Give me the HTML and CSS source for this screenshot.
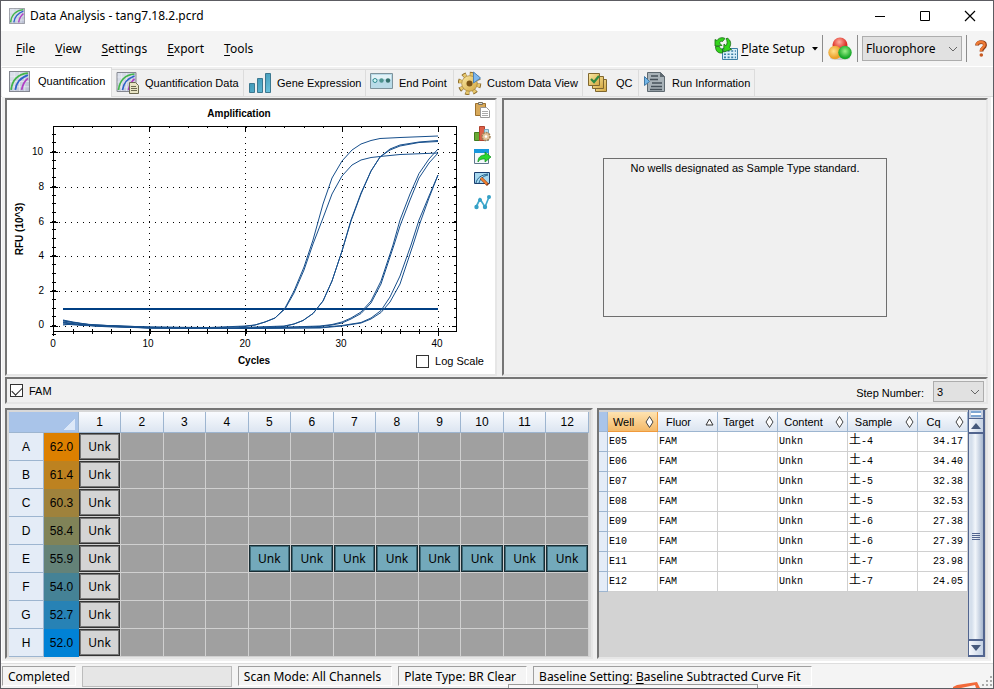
FILE: index.html
```html
<!DOCTYPE html>
<html lang="en">
<head>
<meta charset="utf-8">
<title>Data Analysis - tang7.18.2.pcrd</title>
<link rel="stylesheet" href="styles.css">
</head>
<body>
<svg class="defs" aria-hidden="true">
  <defs>
    <linearGradient id="teal" x1="0" x2="1" y1="0" y2="1"><stop offset="0" stop-color="#2f87a8"/><stop offset="1" stop-color="#6cc3dd"/></linearGradient>
    <linearGradient id="pale" x1="0" x2="1" y1="0" y2="1"><stop offset="0" stop-color="#dfe4ee"/><stop offset="1" stop-color="#b9bfd2"/></linearGradient>
    <linearGradient id="gold" x1="0" x2="1" y1="0" y2="1"><stop offset="0" stop-color="#fae9a6"/><stop offset="1" stop-color="#d3a63e"/></linearGradient>
    <radialGradient id="red" cx=".45" cy=".3"><stop offset="0" stop-color="#ffb0a0"/><stop offset="1" stop-color="#dc2a22"/></radialGradient>
    <radialGradient id="amber" cx=".4" cy=".4"><stop offset="0" stop-color="#ffe08a"/><stop offset="1" stop-color="#eba02a"/></radialGradient>
    <radialGradient id="green" cx=".5" cy=".4"><stop offset="0" stop-color="#9cf08a"/><stop offset="1" stop-color="#17a828"/></radialGradient>
    <symbol id="curves" viewBox="0 0 20 20">
      <path fill="url(#pale)" stroke="#858891" d="M.5.5h19v19H.5z"/>
      <path stroke="#eef0f6" stroke-width=".6" d="M1 5h18M1 10h18M1 15h18M5 1v18M10 1v18M15 1v18"/>
      <g fill="none" stroke-width="1.7"><path stroke="#42b54a" d="M2 18C3 9 8 3 18 2"/><path stroke="#2d62c8" d="M6 18c1-7 4-11 12-14"/><path stroke="#b03fc4" d="M12 18c1-5 2-8 6-11"/></g>
    </symbol>
  </defs>
</svg>
<div class="window">
  <header class="titlebar">
    <svg class="app-icon" width="16" height="16" aria-hidden="true"><use href="#curves"/></svg>
    <h1>Data Analysis - tang7.18.2.pcrd</h1>
    <div class="controls">
      <button aria-label="Minimize"><svg width="12" height="12"><path stroke="#000" d="M1 6.500h10"/></svg></button>
      <button aria-label="Maximize"><svg width="12" height="12"><path fill="none" stroke="#000" d="M1.500 1.500h9v9h-9z"/></svg></button>
      <button aria-label="Close"><svg width="12" height="12"><path stroke="#000" stroke-width="1.200" d="M1 1l10 10M11 1L1 11"/></svg></button>
    </div>
  </header>

  <div class="menubar">
    <nav class="menus">
      <button><u>F</u>ile</button><button><u>V</u>iew</button><button><u>S</u>ettings</button><button><u>E</u>xport</button><button><u>T</u>ools</button>
    </nav>
    <button class="plate-setup">
      <svg width="24" height="24" viewBox="0 0 24 24" aria-hidden="true">
        <path fill="#d9effa" stroke="#3d7fa5" d="M8.500 11.500h15v11h-15z"/>
        <path stroke="#3d7fa5" stroke-width="1.600" stroke-dasharray="2 1.600" d="M10 14h12M10 17.200h12M10 20.400h12"/>
        <path fill="#33d41c" stroke="#176b13" stroke-width=".8" d="M1 9V2.500l2 1C5 .5 8.500 0 11 1.500L8.500 4.500C7 4 6 4.500 5.500 6L8 8.500z"/>
        <path fill="#33d41c" stroke="#176b13" stroke-width=".8" d="M1.500 9.500c0 5 3 7 7 6.500v-4c-1.500 0-3-1-3-2.500zM13 1c4 2 4.500 6 2.500 9.500l2 2-8 2.500.5-8 2 1.800C13.500 6.500 13.500 4 12 2z"/>
      </svg>
      <span><u>P</u>late Setup</span>
      <svg width="6" height="4" aria-hidden="true"><path d="M0 0h6L3 3.500z"/></svg>
    </button>
    <span class="sep"></span>
    <button class="channels" aria-label="Channels">
      <svg width="24" height="24" viewBox="0 0 24 24"><ellipse cx="12" cy="21.500" rx="10" ry="1.500" fill="#ccc"/><circle cx="12" cy="8" r="7.500" fill="url(#red)"/><circle cx="7" cy="15.500" r="6.700" fill="url(#amber)"/><circle cx="17" cy="15.500" r="6.700" fill="url(#green)"/></svg>
    </button>
    <span class="sep"></span>
    <div class="select fluor">
      <select aria-label="View by"><option>Fluorophore</option></select>
      <svg width="10" height="6" aria-hidden="true"><path fill="none" stroke="#666" d="M1 1l4 4 4-4"/></svg>
    </div>
    <span class="sep"></span>
    <button class="help" aria-label="Help">
      <svg width="12" height="17" viewBox="0 0 12 17"><path fill="none" stroke="#8f3c16" stroke-width="3.800" d="M2 5.500C2 1 10.500 1 10 5.300 9.700 8 6.500 7.500 6.500 11.500"/><path fill="none" stroke="#ee7a35" stroke-width="2.400" d="M2 5C2 1 10 1 9.500 5 9.200 7.500 6 7.500 6 11.200"/><circle cx="6.300" cy="15" r="1.800" fill="#c85a22"/></svg>
    </button>
  </div>

  <nav class="tabs" role="tablist">
    <button class="tab active" role="tab" aria-selected="true"><svg width="21" height="21"><use href="#curves"/></svg>Quantification</button>
    <button class="tab" role="tab"><svg width="24" height="24" viewBox="0 0 24 24"><use href="#curves" x="0" y="1" width="21" height="20"/><path fill="#e8e4c4" stroke="#6d6a50" d="M13.500 11.500h6l3 3v8h-9z"/><path stroke="#6d6a50" d="M15 15.500h5M15 17.500h6M15 19.500h6"/></svg>Quantification Data</button>
    <button class="tab" role="tab"><svg width="24" height="24" viewBox="0 0 24 24"><g fill="url(#teal)" stroke="#3c7890"><path d="M1.500 12.500h5v9h-5zM9.500 7.500h5v14h-5zM17.500 2.500h5v19h-5z"/></g></svg>Gene Expression</button>
    <button class="tab" role="tab"><svg width="24" height="24" viewBox="0 0 24 24"><path fill="#b9dbe8" stroke="#7e939c" d="M.5 2.500h22v15H.5z"/><path fill="#e2f2f7" d="M2 4h19v4H2z"/><circle cx="5" cy="9.500" r="2" fill="#d4f7f4" stroke="#328a91"/><circle cx="11.500" cy="9.500" r="2.200" fill="#4d9490"/><circle cx="18" cy="9.500" r="2.200" fill="#34716d"/></svg>End Point</button>
    <button class="tab" role="tab"><svg width="24" height="24" viewBox="0 0 24 24"><circle cx="11.500" cy="12.500" r="9.500" fill="none" stroke="#8d6c2b" stroke-width="4.500" stroke-dasharray="4 3.460"/><circle cx="11.500" cy="12.500" r="9" fill="none" stroke="#e6c76c" stroke-width="3.500" stroke-dasharray="3 4.060" stroke-dashoffset="-.5"/><circle cx="11.500" cy="12.500" r="7.800" fill="url(#gold)" stroke="#a47f35" stroke-width=".7"/><circle cx="11.500" cy="12.500" r="3" fill="#7b5416"/><path fill="#7eb8ee" stroke="#4e83b5" d="M15.500 1l7 6-7 5z"/></svg>Custom Data View</button>
    <button class="tab" role="tab"><svg width="24" height="24" viewBox="0 0 24 24"><g fill="url(#gold)" stroke="#80672e"><path d="M8.500 8.500h11v12h-11z"/><path d="M5.500 5.500h11v12h-11z"/><path d="M1.500 2.500h11v12h-11z"/></g><path fill="none" stroke="#2f8a43" stroke-width="2.200" d="M4 8l3 3 5-6"/></svg>QC</button>
    <button class="tab" role="tab"><svg width="24" height="24" viewBox="0 0 24 24"><path fill="#a8b2b8" stroke="#5e6970" d="M4.500 1.500h13l4 4v15h-17z"/><path fill="#5e6970" d="M17 1v5h5z"/><path stroke="#46515a" stroke-width="1.600" d="M8 5h7M7 8.500h8M9 12h10M8 15.500h11M7 18.500h12"/><path fill="#72b6e8" stroke="#4279a5" d="M1.500 5.500l5 5-5 4z"/></svg>Run Information</button>
  </nav>

  <main class="page">
    <div class="charts">
      <section class="panel amp">
        <div class="plot-row">
          <svg class="plot" viewBox="7 101 460 251" role="img" aria-label="Amplification chart">
            <text class="bold" x="239" y="118" text-anchor="middle">Amplification</text>
            <text class="bold" transform="translate(23 230) rotate(-90)" text-anchor="middle">RFU (10^3)</text>
            <g class="crisp">
              <path class="dots" d="M59 153.500h397M59 188.500h397M59 223.500h397M59 257.500h397M59 292.500h397M59 327.500h397"/>
              <path class="dots" d="M149.500 132v200M245.500 132v200M342.500 132v200M438.500 132v200"/>
              <path class="axis" d="M53.500 127.500h403v205h-403z"/>
              <path stroke="#000" stroke-width="4" stroke-dasharray="1 7.700" d="M53.500 335.700V127"/>
              <path stroke="#000" stroke-width="3" stroke-dasharray="1 7.700" d="M455.500 327.500V127"/>
              <path stroke="#000" stroke-width="5" stroke-dasharray="1 18.250" d="M72.500 332.500H457"/>
              <path stroke="#000" stroke-width="2" stroke-dasharray="1 18.250" d="M72.500 128H457"/>
              <path class="axis" d="M50 153.500h8M50 188.500h8M50 223.500h8M50 257.500h8M50 292.500h8M50 327.500h8M452 153.500h4M452 188.500h4M452 223.500h4M452 257.500h4M452 292.500h4M452 327.500h4M53.500 329v8M149.500 329v8M245.500 329v8M342.500 329v8M438.500 329v8M149.500 128v4M245.500 128v4M342.500 128v4M438.500 128v4"/>
            </g>
            <g text-anchor="end"><text x="43" y="156">10</text><text x="44" y="191">8</text><text x="44" y="226">6</text><text x="44" y="260">4</text><text x="44" y="295">2</text><text x="44" y="329">0</text></g>
            <g text-anchor="middle"><text x="53" y="348">0</text><text x="148" y="348">10</text><text x="245" y="348">20</text><text x="341" y="348">30</text><text x="437" y="348">40</text></g>
            <path class="threshold" d="M63 310h375"/>
            <g class="curve">
              <path d="M63 321L73 323 92 326 149 328 209 328.500 245 327 255 326 265 323 275 319 285 309 294 292 304 268 313 241 323 205 332 179 342 162 352 151 361 145 371 141.500 380 139.500 400 138.500 438 137"/>
              <path d="M63 321.500L73 323.500 92 326 149 328 209 329 245 327.500 255 326 265 323 275 319 285 310 294 294 304 271 313 245 323 219 332 195 342 177 352 166 361 161 371 158.500 380 157.500 400 155.500 438 154"/>
              <path d="M63 323L78 325.500 102 327.500 149 328.500 229 329 284 327 294 325 303 321.500 313 314.500 323 302 332 282 342 252 351 221 361 194 371 172 380 158 390 150 400 146 419 143 438 141.500"/>
              <path d="M63 323.500L78 325.500 102 327.500 149 329 229 329.500 284 327.500 294 325 303 321.500 313 314.500 323 302 332 282 342 252 351 222 361 195 371 172 380 158 390 151 400 147 419 143.500 438 142.500"/>
              <path d="M63 325L83 326.500 149 328.500 245 329.500 320 327 332 325.500 342 323 351 319 361 313 371 302 381 282 393 246 400 221 410 195 419 174.500 429 160 438 150"/>
              <path d="M63 326L72 325 83 326 149 328.500 245 329.500 320 327.500 332 326 342 324 351 320 361 314.500 371 304 381 285 394 246 400 227 410 201 419 179 429 164 438 154"/>
              <path d="M63 322L83 325 149 329 245 329.500 320 328.500 342 326.500 361 323.500 371 319 381 311.500 390 298 400 277 411 246 419 221 429 197 438 176"/>
              <path d="M63 324L83 326 149 329 245 329.500 320 329 342 327 361 324 371 320 381 313.500 390 303 400 285 413 246 420 224 429 199 438 176"/>
            </g>
          </svg>
          <div class="tools">
            <button aria-label="Copy"><svg width="17" height="17" viewBox="0 0 17 17"><path fill="#d8a95a" stroke="#9b702f" d="M1.500 1.500h10v12h-10z"/><path fill="#ddd" stroke="#77705e" d="M4.500.5h4v2h-4z"/><path fill="#fff" stroke="#999" d="M6.500 5.500h6l3 3v7h-9z"/><path stroke="#aaa" d="M8 9.500h6M8 11.500h6M8 13.500h6"/></svg></button>
            <button aria-label="Chart settings"><svg width="17" height="17" viewBox="0 0 17 17"><path fill="#6aa934" stroke="#417c1d" d="M.5 7.500h5v8h-5z"/><path fill="#dc6049" stroke="#b0432f" d="M5.500 1.500h5v14h-5z"/><path fill="#b9deef" stroke="#78a8be" d="M10.500 4.500h4v11h-4z"/><circle cx="12" cy="11.500" r="4" fill="#e3c39a" stroke="#a28055" stroke-width="1.500" stroke-dasharray="2 1"/><circle cx="12" cy="11.500" r="1.300" fill="#fff"/></svg></button>
            <button aria-label="Export"><svg width="17" height="17" viewBox="0 0 17 17"><path fill="#f4f8fb" stroke="#60788c" d="M.5 1.500h14v14H.5z"/><path fill="#1797dd" d="M0 1h15v4H0z"/><path fill="#29d72e" stroke="#138a21" stroke-width=".7" d="M4 14c0-5 3-7 7-7V4l6 5-6 5v-3c-3 0-5 0-7 3z"/></svg></button>
            <button aria-label="Edit chart"><svg width="17" height="17" viewBox="0 0 17 17"><path fill="#a7d8ef" stroke="#1b3f70" d="M.5 1.500h15v11H.5z"/><path fill="none" stroke="#1e5b85" d="M2 12c1-5 5-8 12-9M5 12c1-4 4-7 9-8"/><path stroke="#8a3a18" stroke-width="3" d="M7 7l7 7"/><path stroke="#f08030" stroke-width="2" d="M7 7l6 6"/></svg></button>
            <button aria-label="Show points"><svg width="17" height="17" viewBox="0 0 17 17"><path fill="none" stroke="#42a9cd" stroke-width="1.700" d="M2 13l4-8 5 8 4-10"/><g fill="#35a0c6"><circle cx="2.500" cy="13" r="2.200"/><circle cx="6" cy="6" r="2"/><circle cx="11" cy="13" r="2.200"/><circle cx="15" cy="3" r="2"/></g></svg></button>
          </div>
        </div>
        <div class="plot-foot">
          <span class="x-title">Cycles</span>
          <label class="check"><input type="checkbox">Log Scale</label>
        </div>
      </section>
      <section class="panel standard"><p>No wells designated as Sample Type standard.</p></section>
    </div>

    <section class="panel options">
      <label class="check"><input type="checkbox" checked>FAM</label>
      <label class="step" for="step">Step Number:</label>
      <div class="select stepsel">
        <select id="step"><option>3</option></select>
        <svg width="10" height="6" aria-hidden="true"><path fill="none" stroke="#666" d="M1 1l4 4 4-4"/></svg>
      </div>
    </section>

    <div class="data">
      <section class="panel plate-panel">
        <table class="plate">
          <colgroup><col class="c-row"><col class="c-temp"><col class="c-first"></colgroup>
          <thead><tr id="plate-head"><th colspan="2" class="corner"></th></tr></thead>
          <tbody id="plate-body"></tbody>
        </table>
      </section>
      <section class="panel results-panel">
        <div class="results-scroll">
          <table class="results">
            <colgroup><col class="r0"><col class="r50"><col class="r60"><col class="r60"><col class="r70"><col class="r70"><col class="r50"></colgroup>
            <thead><tr id="results-head"><th class="corner"></th></tr></thead>
            <tbody id="results-body"></tbody>
          </table>
        </div>
        <div class="scrollbar" aria-hidden="true">
          <span class="split"></span>
          <span class="arrow"><svg width="10" height="6"><path fill="#46597c" d="M0 6l5-6 5 6z"/></svg></span>
          <span class="thumb"><i></i><i></i><i></i><i></i></span>
          <span class="arrow down"><svg width="10" height="6"><path fill="#46597c" d="M0 0l5 6 5-6z"/></svg></span>
        </div>
      </section>
    </div>
  </main>

  <footer class="status">
    <span class="cell">Completed</span>
    <span class="progress"></span>
    <span class="cell">Scan Mode: All Channels</span>
    <span class="cell">Plate Type: BR Clear</span>
    <span class="cell">Baseline Setting: <u>B</u>aseline Subtracted Curve Fit</span>
    <svg class="grip" width="10" height="12" aria-hidden="true"><path fill="#aaa" d="M8 0h2v2H8zM4 4h2v2H4zM8 4h2v2H8zM0 8h2v2H0zM4 8h2v2H4zM8 8h2v2H8z"/></svg>
  </footer>
  <div class="peek"></div>
  <svg class="peek-mark" width="32" height="6" aria-hidden="true"><path fill="#f26a3a" d="M0 5l4-2 20-3 3 6h-4l-1-3-14 3H0z"/></svg>
</div>
<script src="script.js"></script>
</body>
</html>
```
FILE: styles.css
```css
* { box-sizing: border-box; }
body {
  margin: 0;
  font: 11px/14px "Liberation Sans", Arial, sans-serif;
  color: #000;
  background: #f0f0f0;
}
button { border: 0; padding: 0; margin: 0; background: none; font: inherit; color: inherit; }
svg { display: block; flex: none; }
.defs { position: absolute; width: 0; height: 0; }

.window {
  position: relative;
  min-height: 100vh;
  display: flex;
  flex-direction: column;
  border: 1px solid #5c5c62;
  overflow: hidden;
}

.titlebar, .menubar, .status, .fluor select { font: 12px/16px "Noto Sans", "Open Sans", sans-serif; }
.titlebar { display: flex; align-items: center; height: 30px; padding: 0 1px 0 8px; background: #fff; }
.titlebar h1 { margin: 0 auto 0 5px; font: inherit; }
.controls { display: flex; }
.controls button { width: 45px; height: 28px; display: grid; place-items: center; }

.menubar { display: flex; align-items: center; height: 35px; padding: 0 6px 0 15px; background: #f4f4f4; }
.menus { display: flex; gap: 20px; margin-right: auto; }
u { text-underline-offset: 2px; }
.plate-setup { display: flex; align-items: center; gap: 3px; }
.plate-setup span { margin-right: 4px; }
.sep { width: 1px; height: 27px; margin: 0 4px; background: #8c8c8c; }
.channels { padding: 0 1px; }
.help { padding-left: 4px; }

.select { position: relative; }
.select select {
  appearance: none;
  width: 100%;
  height: 100%;
  padding: 0 3px;
  border: 1px solid #adadad;
  border-radius: 0;
  background: #e1e1e1;
  color: #000;
}
.select svg { position: absolute; right: 4px; top: 50%; margin-top: -3px; }
.fluor { width: 100px; height: 25px; }

.tabs {
  display: grid;
  grid-template-columns: 110px 132px 122px 88px 129px 56px 116px;
  align-items: end;
  height: 31px;
  padding-left: 1px;
  border-top: 1px solid #fff;
  border-bottom: 1px solid #dcdcdc;
  background: #f0f0f0;
}
.tab {
  display: flex;
  align-items: center;
  gap: 5px;
  height: 27px;
  padding-left: 4px;
  border: 1px solid #dcdcdc;
  border-width: 1px 1px 0 0;
  white-space: nowrap;
}
.tab.active { height: 30px; margin-bottom: -1px; padding: 0 0 3px 7px; gap: 8px; background: #fff; }

.page { flex: 1; display: flex; flex-direction: column; padding: 1px 3px 2px; background: #f0f0f0; border: solid #fff; border-width: 0 2px 2px 1px; }
.panel { border: 2px solid; border-color: #757575 #e6e6e6 #e6e6e6 #757575; }

.charts { flex: 1; display: grid; grid-template-columns: 492fr 486fr; gap: 5px; }
.amp { display: flex; flex-direction: column; background: #fff; }
.plot-row { display: flex; flex: 1; align-items: flex-start; }
.plot { flex: 1; min-width: 0; height: auto; font: 10px "Liberation Sans", Arial, sans-serif; }
.bold, .x-title { font-weight: bold; font-size: 10px; }
.crisp { shape-rendering: crispEdges; }
.dots { stroke: #000; stroke-dasharray: 1 5; }
.axis { fill: none; stroke: #000; }
.threshold { stroke: #003f83; stroke-width: 2; }
.curve { fill: none; stroke: #174f8c; stroke-width: 1; }
.tools { display: flex; flex-direction: column; gap: 6px; width: 28px; padding: 2px 0 0 7px; }
.plot-foot { display: grid; grid-template-columns: 1fr auto 1fr; align-items: center; padding: 0 11px 6px 17px; }
.plot-foot .x-title { grid-column: 2; }
.plot-foot .check { grid-column: 3; justify-self: end; }

.check { display: flex; align-items: center; gap: 6px; }
.check input {
  appearance: none;
  display: grid;
  place-items: center;
  width: 13px;
  height: 13px;
  margin: 0;
  border: 1px solid #333;
  background: #fff;
}
.check input:checked::before {
  content: "";
  width: 9px;
  height: 5px;
  border: solid #222;
  border-width: 0 0 1px 1px;
  transform: translateY(-1px) rotate(-45deg);
}

.standard { display: grid; justify-items: center; align-items: start; padding: 58px 0 0; }
.standard p { width: 59%; height: 159px; margin: 0; padding-top: 2px; border: 1px solid #6e6e6e; text-align: center; }

.options { display: flex; align-items: center; height: 27px; margin-top: 1px; padding-left: 3px; }
.step { margin-left: auto; padding-top: 4px; }
.stepsel { width: 51px; height: 21px; margin: 2px 2px 0 9px; }
.stepsel select { font: inherit; }

.data { display: grid; grid-template-columns: 588fr 391fr; gap: 4px; margin-top: 4px; }
.plate-panel { padding: 2px 2px 0; background: #d8d8d8; }
table { border-collapse: separate; border-spacing: 0; table-layout: fixed; }
th, td { padding: 0; font-weight: normal; }
thead th {
  height: 21px;
  border-right: 1px solid #9db5d0;
  border-bottom: 1px solid #9db5d0;
  background: linear-gradient(#f9fbfe, #dce5f1);
}
.plate { width: 100%; text-align: center; }
.plate thead th, .plate tbody th { font-size: 12px; }
.c-row, .c-temp { width: 35px; }
.c-first { width: 42px; }
thead .corner { background: linear-gradient(135deg, transparent 50%, #dce8f8 50%) right 3px bottom 2px / 11px 11px no-repeat, #a9c4e9; }
.results thead .corner { background: #a9c4e9; }
.plate tbody th { height: 28px; background: #e4ecf7; border-right: 1px solid #9db5d0; border-bottom: 1px solid #9db5d0; }
.plate td { height: 28px; background: #a0a0a0; border-right: 1px solid #d0d0d0; border-bottom: 1px solid #d0d0d0; }
.plate td.temp { border: 0; font-size: 12px; }
.well {
  display: grid;
  place-items: center;
  height: 27px;
  border: 1px solid #333;
  background: #d4d4d4;
  box-shadow: inset 0 0 0 1px #777;
  font: 12px/16px "Noto Sans", "Open Sans", sans-serif;
}
.well.sample { border-color: #182d34; background: #73a9bb; box-shadow: inset 0 0 0 1px #3f6b79; }

.results-panel { display: flex; background: #d3d3d3; }
.results-scroll { flex: 1; min-width: 0; padding-top: 2px; }
.r0 { width: 9px; }
.r50 { width: 50px; }
.r60 { width: 60px; }
.r70 { width: 70px; }
.results { width: 369px; font: 10px/12px "Liberation Mono", "Noto Sans CJK SC", monospace; }
.results thead th { height: 20px; font: 11px/14px "Liberation Sans", Arial, sans-serif; }
.results .sorted { background: linear-gradient(#ffe3b0, #f3b969); border-color: #f09a3c; }
.head { display: flex; align-items: center; justify-content: space-between; padding: 0 3px 0 0; }
.head span { flex: 1; padding-right: 6px; text-align: center; }
.results tbody th { background: #e4ecf7; border-right: 1px solid #9db5d0; border-bottom: 1px solid #9db5d0; }
.results td { height: 20px; padding-left: 1px; background: #fff; border-right: 1px solid #d0d0d0; border-bottom: 1px solid #d0d0d0; }
.results td:last-child { padding-right: 4px; text-align: right; }
.cjk { font-size: 12px; vertical-align: middle; }

.scrollbar { display: flex; flex-direction: column; width: 17px; margin-right: 1px; border: solid #52658f; border-width: 0 2px 2px 1px; background: #c5d0e2; }
.split { height: 6px; margin: 1px 2px; border-top: 2px solid #7fa6d2; border-bottom: 2px solid #7fa6d2; background: #fff; }
.arrow { display: grid; place-items: center; height: 16px; border: solid #52658f; border-width: 1px 0 2px; background: linear-gradient(90deg, #f7f9fd, #c5d2e4); }
.arrow.down { border-width: 2px 0 0; }
.thumb { flex: 1; display: flex; flex-direction: column; align-items: center; justify-content: center; gap: 1px; background: linear-gradient(90deg, #d5dfec 20%, #f2f6fb 45%, #a7b7cf); }
.thumb i { width: 8px; height: 1px; background: #52658f; }

.status { display: flex; align-items: center; gap: 6px; height: 25px; padding: 0 1px; border-top: 1px solid #dedede; background: #f4f4f4; }
.status .cell { height: 20px; padding: 2px 5px 0 5px; border: 1px solid; border-color: #a0a0a0 #fff #fff #a0a0a0; white-space: nowrap; }
.status .cell ~ .cell { padding-right: 10px; }
.progress { width: 150px; height: 21px; border: 1px solid #bcbcbc; background: #e6e6e6; }
.grip { align-self: end; margin-left: auto; }
.peek { position: absolute; left: 507px; bottom: 0; width: 250px; height: 4px; border: 1px solid #999; border-bottom: 0; background: #f8f8f8; }
.peek-mark { position: absolute; right: 8px; bottom: 0; }
```
FILE: script.js
```js
// Plate layout: gradient temperature and block colour for each row.
const rows = [
  ["A", "62.0", "#dd8000"], ["B", "61.4", "#bd8220"], ["C", "60.3", "#9f823c"], ["D", "58.4", "#808358"],
  ["E", "55.9", "#648278"], ["F", "54.0", "#458296"], ["G", "52.7", "#2782b5"], ["H", "52.0", "#0082d6"]
];
const plateHead = document.getElementById("plate-head");
for (let c = 1; c <= 12; c++) plateHead.insertAdjacentHTML("beforeend", `<th>${c}</th>`);
document.getElementById("plate-body").innerHTML = rows.map(([name, temp, color]) => {
  let cells = "";
  for (let c = 1; c <= 12; c++) {
    const sample = name === "E" && c >= 5;
    const filled = c === 1 || sample;
    cells += `<td>${filled ? `<span class="well${sample ? " sample" : ""}">Unk</span>` : ""}</td>`;
  }
  return `<tr><th>${name}</th><td class="temp" style="background:${color}">${temp}</td>${cells}</tr>`;
}).join("");

// Results grid.
const diamond = '<svg width="9" height="12"><path fill="#fff" stroke="#444" d="M4.500 0.500l3.500 5.500-3.500 5.500-3.500-5.500z"/></svg>';
const triangle = '<svg width="9" height="8"><path fill="#fff" stroke="#333" d="M4.500 1l3.500 6H1z"/></svg>';
const heads = ["Well", "Fluor", "Target", "Content", "Sample", "Cq"];
document.getElementById("results-head").insertAdjacentHTML("beforeend", heads.map((h, i) =>
  `<th${i === 0 ? ' class="sorted"' : ""}><div class="head"><span>${h}</span>${i === 1 ? triangle : diamond}</div></th>`).join(""));
const results = [
  ["E05", 4, "34.17"], ["E06", 4, "34.40"], ["E07", 5, "32.38"], ["E08", 5, "32.53"],
  ["E09", 6, "27.38"], ["E10", 6, "27.39"], ["E11", 7, "23.98"], ["E12", 7, "24.05"]
];
document.getElementById("results-body").innerHTML = results.map(([well, n, cq]) =>
  `<tr><th></th><td>${well}</td><td>FAM</td><td></td><td>Unkn</td><td><span class="cjk">土</span>-${n}</td><td>${cq}</td></tr>`).join("");
```
